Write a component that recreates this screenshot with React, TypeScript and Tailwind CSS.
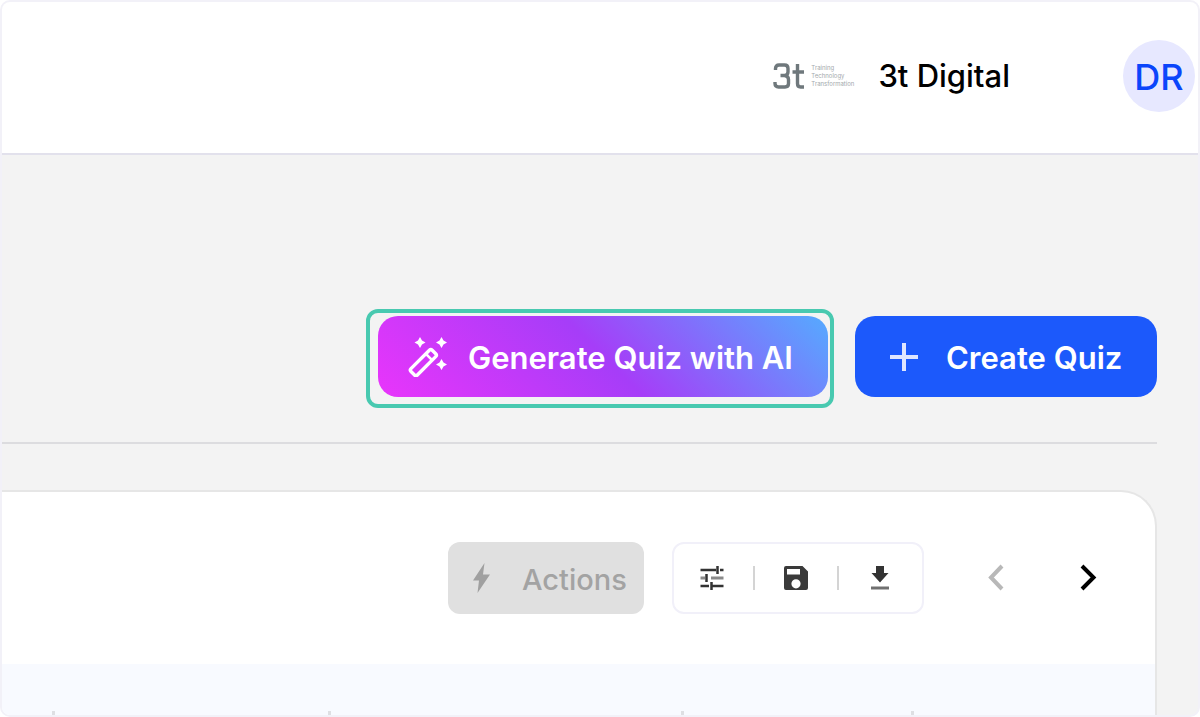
import React from "react";

function BrandMark() {
  return (
    <div className="flex items-center gap-1.5 text-[#6f787c]">
      <svg width="32" height="28" viewBox="0 0 32 28" fill="none" stroke="currentColor" strokeWidth="3.400" aria-label="3t">
        <path d="M2.500 8V6.500Q2.500 3 6 3H11.500Q15 3 15 6.500V10Q15 13.500 11.500 13.500H7.500M11.500 13.500Q15.500 14 15.500 17.500V21.500Q15.500 25 12 25H5.500Q2 25 2 21.500V20" />
        <path d="M24.500 2V21.500Q24.500 25 27.500 25H31M19.500 10H31" />
      </svg>
      <div className="flex flex-col font-['Inter',sans-serif] text-[6px] leading-2 text-[#a3a9ac]">
        <span>Training</span>
        <span>Technology</span>
        <span>Transformation</span>
      </div>
    </div>
  );
}

function WandIcon() {
  return (
    <svg width="40" height="40" viewBox="0 0 40 40" fill="none" aria-hidden="true">
      <g transform="rotate(-45 15 26)" stroke="white" strokeWidth="3.400" strokeLinejoin="round">
        <rect x="0.500" y="21.500" width="30" height="9" rx="2" />
        <path d="M23.500 22V30" strokeWidth="2.500" />
      </g>
      <g fill="white">
        <path d="M12 0l2 3.500L17.500 5.500l-3.500 2L12 11l-2-3.500L6.500 5.500l3.500-2z" />
        <path d="M33.500 0l2 3.500L39 5.500l-3.500 2L33.500 11l-2-3.500L28 5.500l3.500-2z" />
        <path d="M33.500 22l2 3.500 3.500 2-3.500 2-2 3.500-2-3.500-3.500-2 3.500-2z" />
      </g>
    </svg>
  );
}

function PlusIcon() {
  return (
    <svg width="28" height="28" viewBox="0 0 28 28" fill="none" stroke="#dfe6ff" strokeWidth="4" aria-hidden="true">
      <path d="M14 0V28M0 14H28" />
    </svg>
  );
}

function BoltIcon() {
  return (
    <svg width="18" height="32" viewBox="0 0 18 32" fill="#a0a0a0" aria-hidden="true">
      <path d="M12.500 1L1 18.500H7L5.500 31L18 12.500H11z" />
    </svg>
  );
}

function TuneIcon() {
  return (
    <svg width="32" height="32" viewBox="0 0 32 32" fill="none" stroke="#333" strokeWidth="2.500" aria-hidden="true">
      <path d="M4.500 8H20M24 8H27.500M21.500 4V12M4.500 24H13M16 24H27.500M15.500 20V28" />
      <path d="M4.500 16H9M15 16H27.500" stroke="#8a8a8a" strokeWidth="3" />
      <path d="M10.500 12V20" />
    </svg>
  );
}

function SaveIcon() {
  return (
    <svg width="32" height="32" viewBox="0 0 32 32" fill="#3a3a3a" aria-hidden="true">
      <path fillRule="evenodd" d="M6 4H22.500L28 9.500V26Q28 28 26 28H6Q4 28 4 26V6Q4 4 6 4ZM7 7V12.500H20V7ZM16 17.200A4.600 4.600 0 1 0 16 26.400A4.600 4.600 0 1 0 16 17.200Z" />
    </svg>
  );
}

function DownloadIcon() {
  return (
    <svg width="32" height="32" viewBox="0 0 32 32" aria-hidden="true">
      <path d="M12 4H20V11H24.500L16 20.500L7.500 11H12z" fill="#333" />
      <path d="M7 24.500H25V27.500H7z" fill="#707070" />
    </svg>
  );
}

function Chevron({ back = false }: { back?: boolean }) {
  return (
    <svg width="32" height="32" viewBox="0 0 32 32" fill="none" stroke="currentColor" strokeWidth="4" aria-hidden="true">
      <path d={back ? "M22 4L11 15.500L22 27" : "M10 4L21.500 15.500L10 27"} />
    </svg>
  );
}

const toolButton = "flex size-8 items-center justify-center";

export default function App() {
  return (
    <div className="flex min-h-screen flex-col overflow-hidden rounded-[10px] border-2 border-[#f2f1f8] bg-[#f3f3f3] font-['Inter',sans-serif]">
      <header className="flex h-[153px] items-center justify-end border-b-2 border-[#e2e1ec] bg-white pr-[3px] pb-1">
        <BrandMark />
        <span className="ml-6 text-[31px] leading-9 font-medium text-black">3t Digital</span>
        <button aria-label="Account" className="ml-[113px] flex size-18 items-center justify-center rounded-full bg-[#e7e8ff] pt-[2px] text-[36px] font-medium text-[#0b45fb]">
          DR
        </button>
      </header>

      <main className="flex grow flex-col pr-[41px]">
        <div className="flex justify-end gap-[27px] border-b-2 border-[#dcdcdf] pt-[161px] pb-[45px]">
          <div className="relative">
            <button className="flex h-[81px] w-[450px] items-center gap-5 rounded-[20px] bg-[linear-gradient(45deg,#e935fb,#a63df8_50%,#55abff)] pl-[30px] text-[31px] font-semibold whitespace-nowrap text-white">
              <WandIcon />
              <span className="pt-1">Generate Quiz with AI</span>
            </button>
            <div className="pointer-events-none absolute -top-[7px] -right-[6px] -bottom-[11px] -left-[12px] rounded-xl border-4 border-[#48c9b0]" />
          </div>
          <button className="flex h-[81px] w-[302px] items-center gap-7 rounded-[20px] bg-[#1c59fb] pl-[35px] text-[31px] font-semibold whitespace-nowrap text-white">
            <PlusIcon />
            <span className="pt-1">Create Quiz</span>
          </button>
        </div>

        <section className="mt-[46px] flex grow flex-col rounded-tr-[36px] border-t-2 border-r-2 border-[#e6e6e6] bg-white">
          <div className="flex h-[172px] items-center justify-end pr-[51px]">
            <button disabled className="mr-7 flex h-18 w-[196px] items-center gap-8 rounded-xl bg-[#e0e0e0] pl-6 text-[29px] font-medium text-[#a3a3a3]">
              <BoltIcon />
              <span className="pt-1">Actions</span>
            </button>
            <div className="mr-14 flex h-18 w-[252px] items-center justify-center gap-[25px] rounded-xl border-2 border-[#f1f0f9] pr-1">
              <button aria-label="Filters" className={toolButton}><TuneIcon /></button>
              <span className="h-6 w-[2px] bg-[#d4d4d4]" />
              <button aria-label="Save" className={toolButton}><SaveIcon /></button>
              <span className="h-6 w-[2px] bg-[#d4d4d4]" />
              <button aria-label="Download" className={toolButton}><DownloadIcon /></button>
            </div>
            <button aria-label="Previous" disabled className="mr-15 text-[#b8b8b8]"><Chevron back /></button>
            <button aria-label="Next" className="text-black"><Chevron /></button>
          </div>
          <div className="flex grow items-end bg-[#f8faff]">
            <span className="ml-[50px] h-1 w-[3px] bg-[#dedfe3]" />
            <span className="ml-[273px] h-1 w-[3px] bg-[#dedfe3]" />
            <span className="ml-[350px] h-1 w-[3px] bg-[#dedfe3]" />
            <span className="ml-[227px] h-1 w-[3px] bg-[#dedfe3]" />
          </div>
        </section>
      </main>
    </div>
  );
}
